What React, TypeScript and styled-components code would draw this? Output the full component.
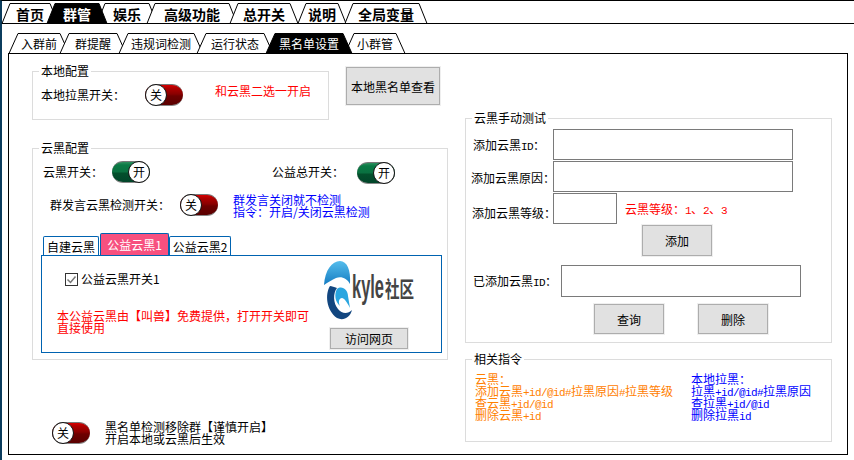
import React from "react";
import styled, { createGlobalStyle } from "styled-components";

const Global = createGlobalStyle`
  html, body { margin: 0; padding: 0; background: #fff; overflow: hidden; }
  * { box-sizing: border-box; }
  body { font-family: "Noto Sans CJK SC", "Liberation Sans", sans-serif; font-size: 12px; color: #000; }
`;

const Root = styled.div`
  width: 854px; height: 460px; background: #fff;
  border-top: 1px solid #000; border-left: 2px solid #0b3c5d;
  display: flex; flex-direction: column;
`;
const MainStrip = styled.div`
  display: flex; align-items: flex-start; height: 23px; padding-top: 2px;
  border-bottom: 1px solid #000; flex: none;
`;
const SubStrip = styled.div`
  display: flex; align-items: flex-start; height: 20px; margin-top: 9px; padding-left: 7px; flex: none;
`;
const TabShape = styled.svg`
  position: absolute; left: 0; top: 0; overflow: visible;
`;
const TabBox = styled.div<{ $w: number; $ol: number; $on?: boolean; $big?: boolean }>`
  position: relative; flex: none; width: ${p => p.$w}px; margin-left: ${p => -p.$ol}px; height: 21px;
  z-index: ${p => (p.$on ? 2 : 1)};
  font-size: ${p => (p.$big ? 14 : 12)}px; font-weight: ${p => (p.$big ? 700 : 400)};
  color: ${p => (p.$on ? "#fff" : "#000")};
`;
const TabText = styled.span`
  position: absolute; inset: 0; display: flex; align-items: center; justify-content: center; line-height: 20px; white-space: nowrap;
`;

function Tab({ w, ol, on, big, s, children }: { w: number; ol: number; on?: boolean; big?: boolean; s: number; children: React.ReactNode }) {
  return (
    <TabBox $w={w} $ol={ol} $on={on} $big={big}>
      <TabShape width={w} height={21}>
        <polygon points={`${s},0.5 ${w - s},0.5 ${w},20.5 0,20.5`} fill={on ? "#000" : "#fff"} stroke="#000" strokeWidth="1" />
      </TabShape>
      <TabText>{children}</TabText>
    </TabBox>
  );
}

const Panel = styled.div`
  margin-left: 6px; width: 840px; height: 402px; border: 1px solid #000; flex: none;
  display: flex; padding: 10px 0 0 23px; background: #fff;
`;
const LeftCol = styled.div`
  width: 416px; flex: none; display: flex; flex-direction: column;
`;
const RightCol = styled.div`
  width: 367px; margin-left: 17px; margin-top: 47px; flex: none; display: flex; flex-direction: column;
`;
const TopRow = styled.div`
  display: flex; align-items: flex-start;
`;
const Group = styled.fieldset<{ $w: number; $h: number; $mt?: number }>`
  margin: ${p => p.$mt ?? 0}px 0 0; padding: 0; min-width: 0;
  width: ${p => p.$w}px; height: ${p => p.$h}px; border: 1px solid #dcdcdc; flex: none;
`;
const Legend = styled.legend`
  margin-left: 6px; padding: 0 2px; font-size: 12px; line-height: 14px;
`;
const Row = styled.div<{ $mt?: number; $h?: number; $align?: string }>`
  display: flex; align-items: ${p => p.$align ?? "center"}; margin-top: ${p => p.$mt ?? 0}px;
  ${p => (p.$h ? `height: ${p.$h}px;` : "")}
`;
const Label = styled.span<{ $ml?: number; $w?: number; $dy?: number }>`
  flex: none; margin-left: ${p => p.$ml ?? 0}px; ${p => (p.$w ? `width: ${p.$w}px;` : "")}
  margin-top: ${p => p.$dy ?? 0}px; line-height: 14px; white-space: nowrap;
`;
const Note = styled(Label)<{ $color: string }>`
  color: ${p => p.$color};
`;
const Mono = styled.span`
  font-family: "Liberation Mono", monospace; font-size: 11px; letter-spacing: -0.6px; line-height: 0;
`;
const Button = styled.div<{ $w: number; $h: number; $ml?: number; $mt?: number }>`
  flex: none; width: ${p => p.$w}px; height: ${p => p.$h}px;
  margin-left: ${p => p.$ml ?? 0}px; margin-top: ${p => p.$mt ?? 0}px;
  display: flex; align-items: center; justify-content: center;
  background: #e1e1e1; border: 1px solid #adadad; box-shadow: 0 0 0 1px #efefef; white-space: nowrap;
`;
const Input = styled.div<{ $w: number; $h: number }>`
  flex: none; width: ${p => p.$w}px; height: ${p => p.$h}px; border: 1px solid #7a7a7a; background: #fff;
`;

const Pill = styled.div<{ $on?: boolean; $ml?: number; $dy?: number }>`
  flex: none; width: 38px; height: 22px; border-radius: 11px;
  margin-left: ${p => p.$ml ?? 0}px; margin-top: ${p => p.$dy ?? 0}px;
  display: flex; justify-content: ${p => (p.$on ? "flex-end" : "flex-start")};
  border-top: 1px solid #777; border-bottom: 1px solid #888;
  background: ${p => p.$on
    ? "linear-gradient(#2f8f5f 0, #0a7a45 15%, #0a7040 50%, #03502c 55%, #02452a 100%)"
    : "linear-gradient(#d80000 0, #b00000 15%, #8a0000 45%, #6e0000 55%, #5a0000 100%)"};
`;
const Knob = styled.div`
  width: 22px; height: 22px; margin-top: -1px; border-radius: 50%; background: #fff; border: 1px solid #111;
  display: flex; align-items: center; justify-content: center; font-size: 12px; font-weight: 400; line-height: 1;
  flex: none;
`;
function Toggle({ on, ml, dy }: { on?: boolean; ml?: number; dy?: number }) {
  return (
    <Pill $on={on} $ml={ml} $dy={dy}>
      <Knob>{on ? "开" : "关"}</Knob>
    </Pill>
  );
}

const NestedStrip = styled.div`
  display: flex; align-items: flex-end; height: 22px; margin: 15px 0 0 10px;
`;
const NestedTab = styled.div<{ $w: number; $on?: boolean }>`
  flex: none; width: ${p => p.$w}px; height: ${p => (p.$on ? 22 : 19)}px;
  border: 1px solid #0063b1; border-bottom: none; border-radius: 2px 2px 0 0;
  background: ${p => (p.$on ? "#f7507f" : "#fff")}; color: ${p => (p.$on ? "#fff" : "#000")};
  display: flex; align-items: center; justify-content: center; white-space: nowrap;
  margin-left: ${p => (p.$on ? 1 : 0)}px;
`;
const NestedPanel = styled.div`
  margin-left: 8px; width: 401px; height: 98px; border: 1px solid #0063b1; display: flex;
`;
const NestedLeft = styled.div`
  width: 281px; flex: none; padding: 17px 0 0 15px; display: flex; flex-direction: column;
`;
const NestedRight = styled.div`
  flex: none; padding-top: 4px; display: flex; flex-direction: column;
`;
const Check = styled.label`
  display: flex; align-items: center; margin-left: 8px; height: 12px; white-space: nowrap; line-height: 12px;
`;
const Box = styled.span`
  width: 13px; height: 13px; border: 1px solid #333; display: flex; margin-right: 3px; flex: none; background: #fff;
`;
const Warn = styled.div`
  margin-top: 25px; width: 256px; color: #f00; line-height: 12px;
`;
const Two = styled.div`
  line-height: 12px; white-space: nowrap; color: ${(p: { $color?: string }) => p.$color ?? "#000"};
`;
const Blue = styled(Two)`
  margin-left: 15px;
`;
const Commands = styled.div`
  display: flex; padding: 7px 0 0 9px;
`;
const CmdCol = styled(Two)<{ $w: number }>`
  width: ${p => p.$w}px; flex: none;
`;
const BottomRow = styled.div`
  display: flex; align-items: flex-start; margin-top: 62px; padding-left: 20px;
`;
const BottomText = styled(Two)`
  margin-left: 15px; margin-top: -1px;
`;
const LogoSvg = styled.svg`
  display: block; flex: none; overflow: visible;
`;

const mainTabs = [
  ["首页", 56, 0], ["群管", 60, 11], ["娱乐", 60, 10], ["高级功能", 90, 10],
  ["总开关", 68, 7], ["说明", 48, 0], ["全局变量", 82, 1],
] as const;
const subTabs = [
  ["入群前", 60, 0], ["群提醒", 66, 9], ["违规词检测", 84, 7], ["运行状态", 76, 6],
  ["黑名单设置", 86, 7], ["小群管", 60, 7],
] as const;

export default function App() {
  return (
    <>
      <Global />
      <Root>
        <MainStrip>
          {mainTabs.map(([t, w, ol]) => (
            <Tab key={t} w={w} ol={ol} s={8} big on={t === "群管"}>{t}</Tab>
          ))}
        </MainStrip>
        <SubStrip>
          {subTabs.map(([t, w, ol]) => (
            <Tab key={t} w={w} ol={ol} s={9} on={t === "黑名单设置"}>{t}</Tab>
          ))}
        </SubStrip>
        <Panel>
          <LeftCol>
            <TopRow>
              <Group $w={297} $h={56}>
                <Legend>本地配置</Legend>
                <Row $mt={6} $h={22}>
                  <Label $ml={8} $w={104}>本地拉黑开关：</Label>
                  <Toggle />
                  <Note $color="#f00" $ml={32} $dy={-8}>和云黑二选一开启</Note>
                </Row>
              </Group>
              <Button $w={94} $h={38} $ml={17} $mt={3}>本地黑名单查看</Button>
            </TopRow>
            <Group $w={416} $h={219} $mt={21}>
              <Legend>云黑配置</Legend>
              <Row $mt={6} $h={22}>
                <Label $ml={10} $w={69}>云黑开关：</Label>
                <Toggle on />
                <Label $ml={122} $w={85}>公益总开关：</Label>
                <Toggle on dy={1} />
              </Row>
              <Row $mt={11} $h={24} $align="flex-start">
                <Label $ml={17} $w={130} $dy={4}>群发言云黑检测开关：</Label>
                <Toggle />
                <Blue $color="#00f">群发言关闭就不检测<br />指令：开启/关闭云黑检测</Blue>
              </Row>
              <NestedStrip>
                <NestedTab $w={56}>自建云黑</NestedTab>
                <NestedTab $w={69} $on>公益云黑1</NestedTab>
                <NestedTab $w={62}>公益云黑2</NestedTab>
              </NestedStrip>
              <NestedPanel>
                <NestedLeft>
                  <Check>
                    <Box>
                      <svg width="11" height="11" viewBox="0 0 11 11">
                        <path d="M1.5 5.5 L4.5 8.5 L9.5 2.5" fill="none" stroke="#777" strokeWidth="1.5" />
                      </svg>
                    </Box>
                    公益云黑开关1
                  </Check>
                  <Warn>本公益云黑由【叫兽】免费提供，打开开关即可直接使用</Warn>
                </NestedLeft>
                <NestedRight>
                  <LogoSvg width="92" height="60" viewBox="0 0 92 60">
                    <defs>
                      <linearGradient id="dome" x1="0" y1="0" x2="0" y2="1">
                        <stop offset="0" stopColor="#55bdec" />
                        <stop offset="1" stopColor="#157cc2" />
                      </linearGradient>
                    </defs>
                    <path d="M1 25 C2 10 9 1 17 1 C24 1 28 10 27 24 C24 18 18 16 13 18 C9 20 5 22 1 25Z" fill="url(#dome)" />
                    <path d="M7 26 C2 34 3 50 14 58 C20 61 27 58 29 50 C25 54 19 54 15 49 C10 43 10 33 14 28 C11 27 9 26 7 26Z" fill="#12467f" />
                    <path d="M14 29 C19 25 25 30 25 36 L27 48 C24 42 21 38 19 38 C16 38 15 42 17 46 C12 42 11 34 14 29Z" fill="#2aa6e0" />
                    <text x="29" y="38" fontSize="34" fontWeight="700" fill="#444" textLength="32" lengthAdjust="spacingAndGlyphs" fontFamily="'Liberation Sans', sans-serif">kyle</text>
                    <text x="62" y="37" fontSize="22" fontWeight="700" fill="#444" textLength="29" lengthAdjust="spacingAndGlyphs" fontFamily="'Noto Sans CJK SC', sans-serif">社区</text>
                  </LogoSvg>
                  <Button $w={78} $h={21} $ml={7} $mt={8}>访问网页</Button>
                </NestedRight>
              </NestedPanel>
            </Group>
            <BottomRow>
              <Toggle />
              <BottomText>黑名单检测移除群【谨慎开启】<br />开启本地或云黑后生效</BottomText>
            </BottomRow>
          </LeftCol>
          <RightCol>
            <Group $w={367} $h={232}>
              <Legend>云黑手动测试</Legend>
              <Row $mt={4}>
                <Label $ml={7} $w={80}>添加云黑<Mono>ID</Mono>：</Label>
                <Input $w={240} $h={31} />
              </Row>
              <Row $mt={1}>
                <Label $ml={5} $w={82} $dy={2}>添加云黑原因：</Label>
                <Input $w={240} $h={31} />
              </Row>
              <Row $mt={1}>
                <Label $ml={6} $w={81} $dy={9}>添加云黑等级：</Label>
                <Input $w={64} $h={31} />
                <Note $color="#f00" $ml={8}>云黑等级：<Mono>1</Mono>、<Mono>2</Mono>、<Mono>3</Mono></Note>
              </Row>
              <Button $w={70} $h={31} $ml={176} $mt={1}>添加</Button>
              <Row $mt={9}>
                <Label $ml={7} $w={88}>已添加云黑<Mono>ID</Mono>：</Label>
                <Input $w={240} $h={32} />
              </Row>
              <Row $mt={7}>
                <Button $w={70} $h={30} $ml={128}>查询</Button>
                <Button $w={70} $h={30} $ml={34}>删除</Button>
              </Row>
            </Group>
            <Group $w={367} $h={90} $mt={9}>
              <Legend>相关指令</Legend>
              <Commands>
                <CmdCol $w={216} $color="#ff8000">
                  云黑：<br />
                  添加云黑<Mono>+id/@id#</Mono>拉黑原因<Mono>#</Mono>拉黑等级<br />
                  查云黑<Mono>+id/@id</Mono><br />
                  删除云黑<Mono>+id</Mono>
                </CmdCol>
                <CmdCol $w={130} $color="#00f">
                  本地拉黑：<br />
                  拉黑<Mono>+id/@id#</Mono>拉黑原因<br />
                  查拉黑<Mono>+id/@id</Mono><br />
                  删除拉黑<Mono>id</Mono>
                </CmdCol>
              </Commands>
            </Group>
          </RightCol>
        </Panel>
      </Root>
    </>
  );
}
